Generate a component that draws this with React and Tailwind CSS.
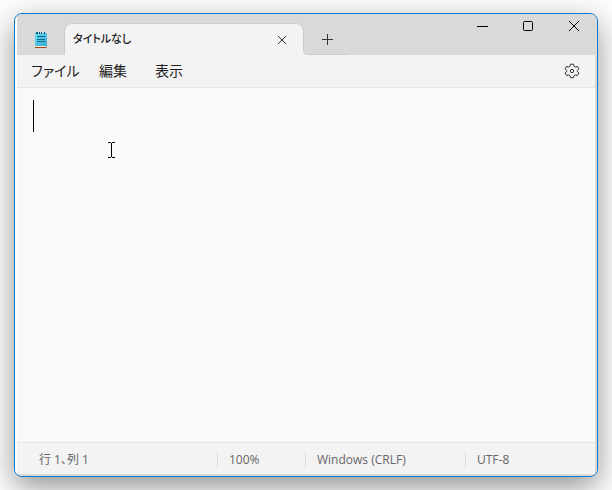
import React, { useState } from "react";

const menus = ["ファイル", "編集", "表示"];

function NotepadIcon() {
  return (
    <svg width="14" height="18" viewBox="0 0 14 18" aria-hidden="true">
      <defs>
        <linearGradient id="page" x1="0" y1="0" x2="1" y2="1">
          <stop offset="0" stopColor="#6fdcf5" />
          <stop offset="1" stopColor="#35a9cf" />
        </linearGradient>
      </defs>
      <rect x="1" y="14" width="12" height="3" fill="#e8eef0" />
      <rect x="1" y="16" width="11" height="1" fill="#a8450c" />
      <path d="M12 14h1v3h-1z" fill="#b09c94" />
      <rect x="1" y="2" width="12" height="13" fill="url(#page)" />
      <path d="M2 1h2v2H2zM5 1h1v2H5zM7 1h1v2H7zM10 1h1v2h-1z" fill="#0b5a78" />
      <path d="M3 5h8v1H3zM3 8h8v1H3zM3 10h8v1H3z" fill="#066a8f" />
    </svg>
  );
}

// Small outward curve where the tab meets the title bar
function TabFlare({ flip }) {
  return (
    <svg
      width="5"
      height="5"
      viewBox="0 0 5 5"
      aria-hidden="true"
      className={flip ? "-ml-px -scale-x-100" : "-mr-px"}
    >
      <path d="M0 5C3 5 4 4 4 0H5V5Z" fill="#f3f3f3" />
      <path d="M0 4.5C3 4.5 4.5 3.500 4.500 0" fill="none" stroke="#cbcbcb" />
    </svg>
  );
}

function TitleBar() {
  return (
    <header className="flex h-[41px] bg-[#d9d9d9]">
      <div className="flex w-[44px] shrink-0 items-end pb-[6px] pl-[17px]">
        <NotepadIcon />
      </div>

      {/* Tab */}
      <div className="-ml-px flex items-end">
        <TabFlare />
        <div className="flex h-[32px] w-[240px] items-center justify-between rounded-t-[8px] border border-b-0 border-[#cbcbcb] bg-[#f3f3f3] pl-[8px] pr-[9px]">
          <span className="text-[11px] font-medium text-[#1a1a1a]">タイトルなし</span>
          <button aria-label="タブを閉じる" className="flex h-6 w-6 items-center justify-center rounded">
            <svg width="10" height="10" viewBox="0 0 10 10" fill="none" stroke="#333">
              <path d="M1 1l8 8M9 1L1 9" />
            </svg>
          </button>
        </div>
        <TabFlare flip />
      </div>

      <button
        aria-label="新しいタブ"
        className="flex w-[39px] items-center justify-center border-b border-[#cbcbcb] pt-[11px]"
      >
        <svg width="11" height="11" viewBox="0 0 11 11" fill="none" stroke="#333">
          <path d="M5.5 0v11M0 5.500h11" />
        </svg>
      </button>

      {/* Window controls */}
      <div className="-mr-0.5 ml-auto flex h-6">
        <button aria-label="最小化" className="flex w-[45px] items-center justify-center">
          <svg width="11" height="10" viewBox="0 0 11 10" stroke="#000">
            <path d="M0 5.500h11" />
          </svg>
        </button>
        <button aria-label="最大化" className="flex w-[46px] items-center justify-center">
          <svg width="10" height="10" viewBox="0 0 10 10" fill="none" stroke="#000">
            <rect x="0.5" y="0.5" width="9" height="9" rx="1" />
          </svg>
        </button>
        <button aria-label="閉じる" className="flex w-[46px] items-center justify-center">
          <svg width="10" height="10" viewBox="0 0 10 10" fill="none" stroke="#000">
            <path d="M0 0l10 10M10 0L0 10" />
          </svg>
        </button>
      </div>
    </header>
  );
}

function MenuBar() {
  return (
    <nav className="flex h-[33px] items-center border-b border-[#e5e5e5] bg-[#f3f3f3] pl-[14px] pr-[15px]">
      <div className="grid grid-cols-[68px_56px_56px] justify-items-start text-[14px] leading-5 text-[#1f1f1f]">
        {menus.map((m) => (
          <button key={m}>{m}</button>
        ))}
      </div>
      <button aria-label="設定" className="ml-auto">
        <svg width="16" height="16" viewBox="0 0 16 16" fill="none" stroke="#333" strokeLinejoin="round">
          <path d="M6.500 1.200h3l.5 2.100 1.300.8 2.100-.7 1.500 2.600-1.600 1.400v1.200l1.600 1.400-1.500 2.600-2.100-.7-1.300.8-.5 2.100h-3L6 12.700l-1.300-.8-2.100.7L1.100 10l1.600-1.400V7.400L1.100 6l1.500-2.600 2.100.7L6 3.300Z" />
          <circle cx="8" cy="8" r="1.700" />
        </svg>
      </button>
    </nav>
  );
}

function Editor() {
  const [text, setText] = useState("");

  return (
    <main className="relative flex flex-1 bg-[#f9f9f9]">
      <textarea
        aria-label="テキスト エディター"
        className="w-full flex-1 resize-none bg-transparent px-4 py-3 text-[24px] leading-8 outline-none"
        value={text}
        onChange={(e) => setText(e.target.value)}
      />
      {text === "" && <span className="absolute left-4 top-3 h-8 w-px bg-black" />}
      {/* Mouse pointer */}
      <svg
        className="pointer-events-none absolute left-[91px] top-[54px]"
        width="7"
        height="16"
        viewBox="0 0 7 16"
        aria-hidden="true"
      >
        <path d="M0 0h3v1h1V0h3v1H4v14h3v1H4v-1H3v1H0v-1h3V1H0z" fill="#000" />
      </svg>
    </main>
  );
}

function StatusBar() {
  return (
    <footer className="flex h-[32px] items-center border-t border-[#e5e5e5] bg-[#f3f3f3] pt-[2px] text-[12px] leading-4 text-[#666]">
      <span className="flex-1 pl-[22px]">行 1、列 1</span>
      <span className="w-[88px] border-l border-[#dcdcdc] pl-[11px]">100%</span>
      <span className="w-[160px] border-l border-[#dcdcdc] pl-[11px]">Windows (CRLF)</span>
      <span className="w-[130px] border-l border-[#dcdcdc] pl-[11px]">UTF-8</span>
    </footer>
  );
}

export default function App() {
  return (
    <div className="flex h-screen flex-col overflow-hidden bg-[#fdfdfd] px-[14px] py-[13px] font-['Open_Sans','Noto_Sans_CJK_JP',sans-serif] [font-feature-settings:'palt']">
      <div className="flex flex-1 flex-col overflow-hidden rounded-[8px] border border-[#0078d4] bg-[#d9d9d9] shadow-[0_10px_30px_rgba(0,0,0,0.42)]">
        <div className="flex flex-1 flex-col border-b-2 border-l-2 border-r-2 border-b-[#d9d9d9] border-l-white border-r-[#d9d9d9]">
          <TitleBar />
          <MenuBar />
          <Editor />
          <StatusBar />
        </div>
      </div>
    </div>
  );
}
